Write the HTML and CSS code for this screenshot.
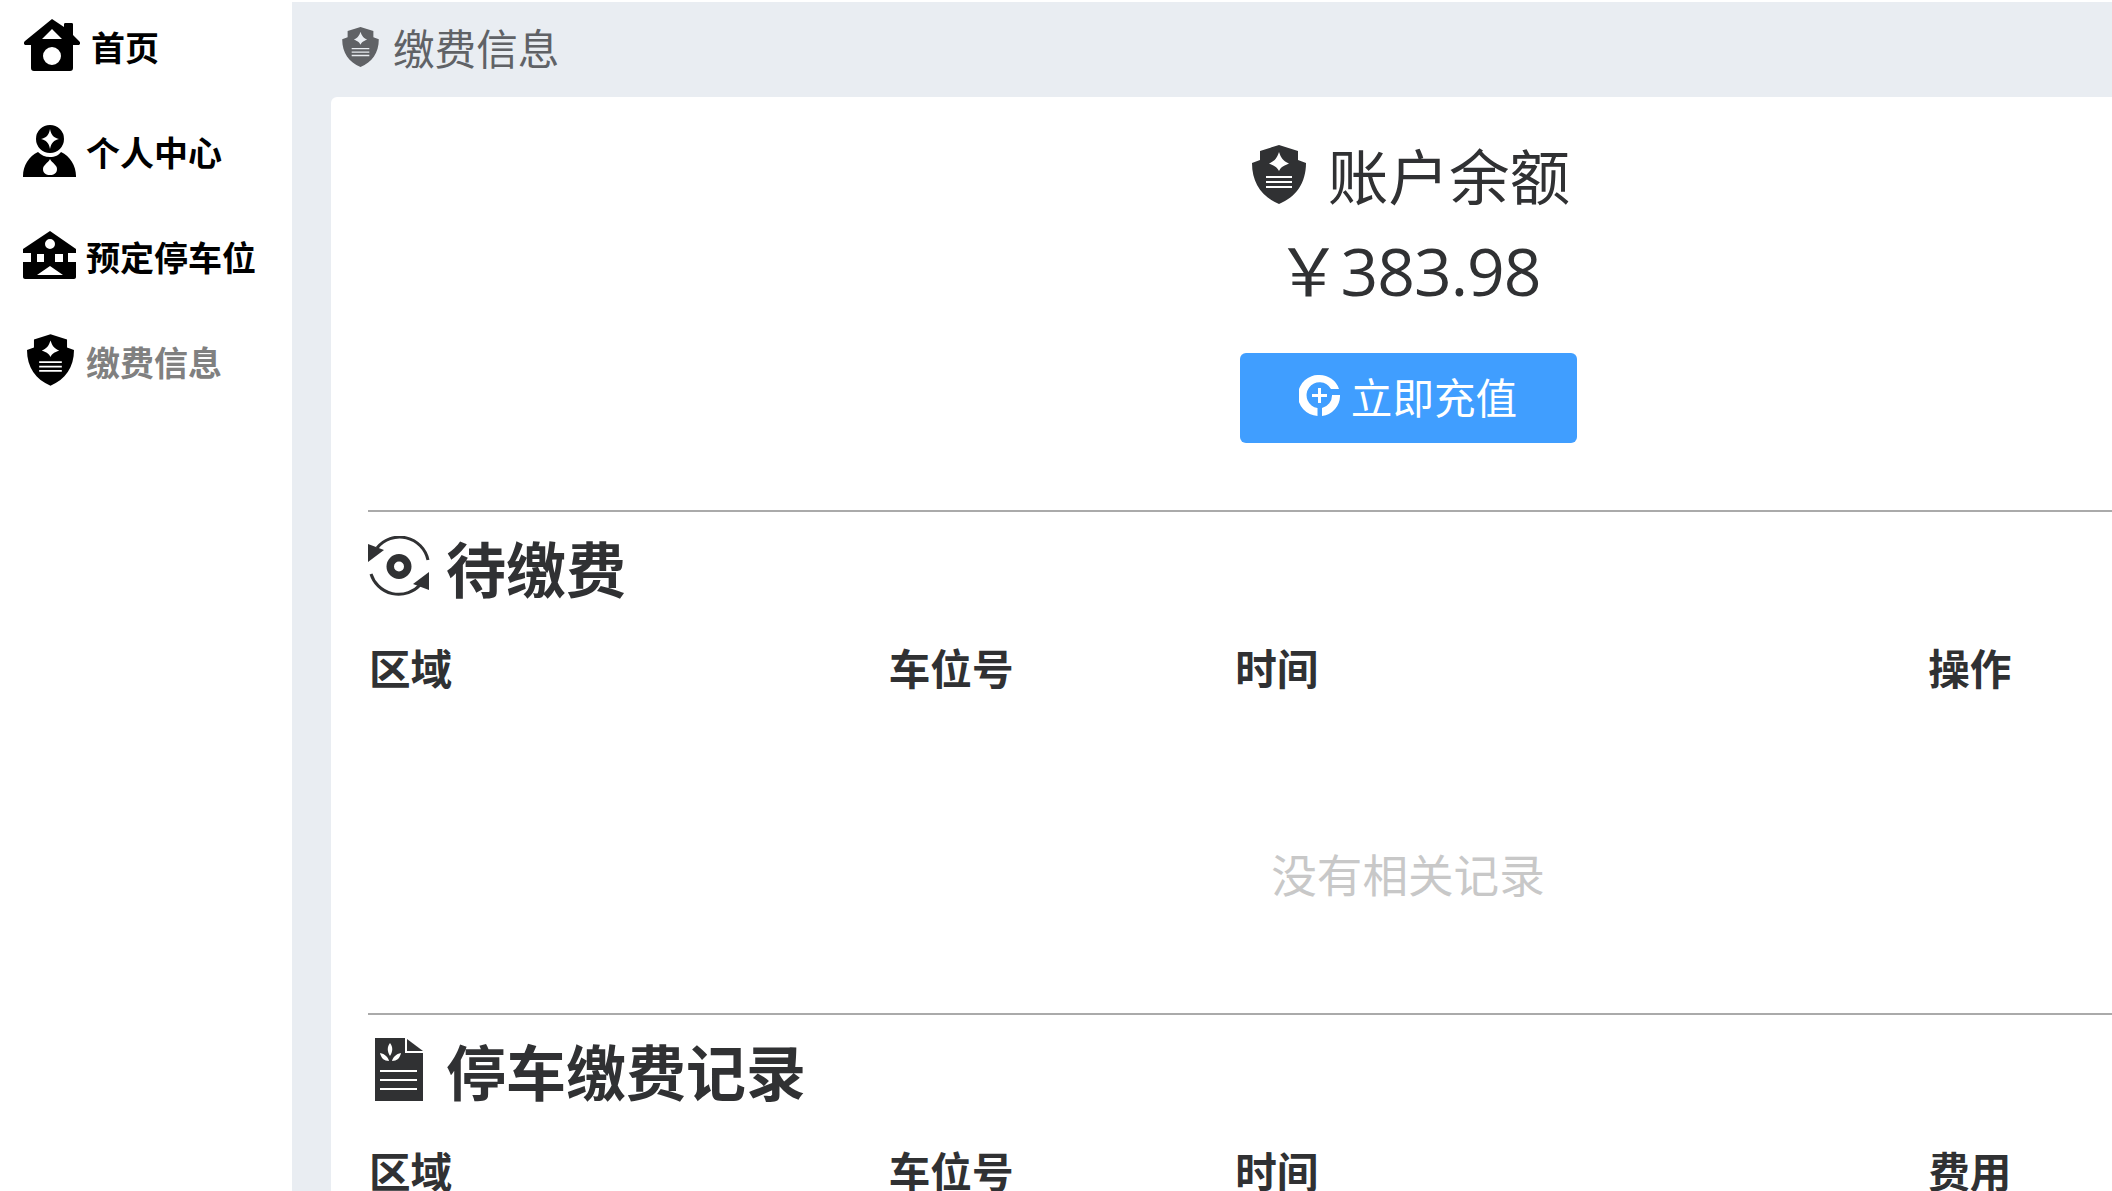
FILE: index.html
```html
<!DOCTYPE html>
<html lang="zh-CN">
<head>
    <meta charset="UTF-8">
    <meta name="viewport" content="width=device-width, initial-scale=1.0">
    <title>缴费信息</title>
    <link rel="stylesheet" href="styles.css">
</head>
<body>
    <svg class="defs">
        <symbol id="icon-shield" viewBox="0 0 54 59">
            <path fill-rule="evenodd" d="M27 0L46 6V15L54 18C54 38 44 52 27 59C10 52 0 38 0 18L8 15V6ZM27 7C25 13 23 16 17 18.500C23 21 25 22 27 26C29 22 31 21 37 18.500C31 16 29 13 27 7ZM14 31V33H40V31ZM14 36V38H40V36ZM14 41V43H40V41Z"/>
        </symbol>
    </svg>
    <div class="layout">
        <aside class="sidebar">
            <a class="nav-item nav-home">
                <svg class="nav-icon icon-house" viewBox="0 0 56 52"><path fill-rule="evenodd" d="M28 0L40 8V5C40 4 41 4 42 4H47C48 4 49 4 49 5V16L55 22C57 24 56 26 54 26H49V49C49 51 48 52 46 52H10C8 52 7 51 7 49V26H2C0 26 -1 24 1 22ZM28 10L18 20H38ZM28 28A9 9 0 1 0 28 46A9 9 0 1 0 28 28Z"/></svg>
                <span>首页</span>
            </a>
            <a class="nav-item">
                <svg class="nav-icon icon-person" viewBox="0 0 53 53"><path fill-rule="evenodd" d="M27 1A14 14 0 1 1 27 29A14 14 0 1 1 27 1ZM27 5C26 11 23 14 18 15C23 16 26 19 27 25C28 19 31 16 36 15C31 14 28 11 27 5ZM15 28C18 31 22 33 27 33C32 33 36 31 38 28C47 32 53 42 53 52V53H0V52C0 42 6 32 15 28ZM27 35C25 39 20 41 20 45C20 49 23 51 27 51C31 51 34 49 34 45C34 41 29 39 27 35Z"/></svg>
                <span>个人中心</span>
            </a>
            <a class="nav-item">
                <svg class="nav-icon icon-parking" viewBox="0 0 53 48"><path fill-rule="evenodd" d="M27 0L53 18V22H45V31H53V46C53 47 52 48 51 48H2C1 48 0 47 0 46V31H8V22H0V18ZM27 8A5 5 0 1 0 27 18A5 5 0 1 0 27 8ZM14 23V31H21V23ZM32 23V31H40V23ZM27 35L14 44H40Z"/></svg>
                <span>预定停车位</span>
            </a>
            <a class="nav-item nav-active">
                <svg class="nav-icon icon-shield-nav"><use href="#icon-shield"/></svg>
                <span>缴费信息</span>
            </a>
        </aside>
        <main class="main">
            <header class="page-header">
                <svg class="header-icon"><use href="#icon-shield"/></svg>
                <span>缴费信息</span>
            </header>
            <div class="card">
                <section class="balance">
                    <div class="balance-title">
                        <svg class="balance-icon"><use href="#icon-shield"/></svg>
                        <span>账户余额</span>
                    </div>
                    <div class="balance-amount">￥383.98</div>
                    <button class="recharge-btn">
                        <svg class="recharge-icon" viewBox="0 0 41 41"><path fill-rule="evenodd" d="M20.500 0A20.500 20.500 0 0 1 40 14H32A13 13 0 1 0 18.500 33V41A20.500 20.500 0 0 1 20.500 0ZM41 20A20.500 20.500 0 0 1 23 41V33A13 13 0 0 0 33 20Z"/><path d="M19 13H22V19H28V22H22V28H19V22H13V19H19Z"/></svg>
                        <span>立即充值</span>
                    </button>
                </section>
                <section class="records">
                    <h2 class="section-title">
                        <svg class="section-icon" viewBox="0 0 62 61"><path fill="none" stroke="currentColor" stroke-width="3" d="M9 12A29 29 0 0 1 60 24M3 38A29 29 0 0 0 52 49"/><path d="M0 8L16 14L0 26ZM61 36V54L45 48Z"/><path fill-rule="evenodd" d="M31 18A12.500 12.500 0 1 1 31 43A12.500 12.500 0 1 1 31 18ZM31 25.500A5 5 0 1 0 31 35.500A5 5 0 1 0 31 25.500Z"/></svg>
                        <span>待缴费</span>
                    </h2>
                    <div class="table-row table-head">
                        <div>区域</div><div>车位号</div><div>时间</div><div>操作</div>
                    </div>
                    <div class="table-empty">没有相关记录</div>
                </section>
                <section class="records">
                    <h2 class="section-title">
                        <svg class="section-icon icon-doc" viewBox="0 0 48 63"><path fill-rule="evenodd" d="M0 0H30V15H48V63H0ZM5 32V34H42V32ZM5 41V43H42V41ZM5 50V52H42V50ZM15 5C12 9 12 13 15 18C18 13 18 9 15 5ZM5 15C6 20 9 23 14 23C13 19 10 16 5 15ZM26 15C21 16 18 19 17 23C22 23 25 20 26 15Z"/><path d="M32 1L48 13H32Z"/></svg>
                        <span>停车缴费记录</span>
                    </h2>
                    <div class="table-row table-head">
                        <div>区域</div><div>车位号</div><div>时间</div><div>费用</div>
                    </div>
                </section>
            </div>
        </main>
    </div>
</body>
</html>
```

FILE: styles.css
```css
html, body {
    margin: 0;
    height: 100%;
    overflow: hidden;
    background-color: #fff;
}
body {
    font-family: "Noto Sans CJK SC", "Noto Sans", sans-serif;
    color: #303133;
}
.defs {
    display: none;
}
.layout {
    display: flex;
    width: 2485px;
    height: 1191px;
}
.sidebar {
    width: 292px;
    flex-shrink: 0;
}
.nav-item {
    display: flex;
    align-items: center;
    height: 92px;
    margin-bottom: 13px;
    padding-left: 23px;
    gap: 10px;
    font-size: 34px;
    font-weight: 700;
    color: #000;
}
.nav-home {
    gap: 11px;
    padding-left: 24px;
}
.nav-active {
    color: #808080;
}
.nav-icon {
    flex-shrink: 0;
    margin-top: -2px;
}
.icon-house {
    width: 56px;
    height: 52px;
}
.icon-person {
    width: 53px;
    height: 53px;
}
.icon-parking {
    width: 53px;
    height: 48px;
}
.icon-shield-nav {
    width: 47px;
    height: 52px;
    margin-left: 4px;
    margin-right: 2px;
}
.main {
    flex: 1;
    display: flex;
    flex-direction: column;
    margin-top: 2px;
    background-color: #e9edf2;
}
.page-header {
    display: flex;
    flex-shrink: 0;
    align-items: center;
    height: 95px;
    padding-left: 50px;
    padding-bottom: 6px;
    box-sizing: border-box;
    gap: 14px;
    font-size: 41.6px;
    color: #606266;
}
.header-icon {
    width: 37px;
    height: 40px;
    fill: #606266;
}
.card {
    flex: 1;
    margin-left: 39px;
    padding: 0 37px;
    background-color: #fff;
    border-radius: 6px 0 0 0;
}
.balance {
    display: flex;
    flex-direction: column;
    align-items: center;
    height: 413px;
    padding-top: 46px;
    box-sizing: border-box;
}
.balance-title {
    display: flex;
    align-items: center;
    gap: 22px;
    padding-left: 6px;
    font-size: 60.6px;
    line-height: 62px;
}
.balance-icon {
    width: 54px;
    height: 59px;
    fill: #303133;
}
.balance-amount {
    margin-top: 31px;
    font-family: "Open Sans", "Noto Sans CJK SC", sans-serif;
    font-size: 66px;
    letter-spacing: -1px;
    line-height: 68px;
}
.recharge-btn {
    display: flex;
    align-items: center;
    justify-content: center;
    gap: 11px;
    width: 337px;
    height: 90px;
    margin-top: 49px;
    padding: 0 0 5px;
    border: none;
    border-radius: 6px;
    background-color: #409eff;
    color: #fff;
    font-family: inherit;
    font-size: 41.6px;
}
.recharge-icon {
    width: 41px;
    height: 41px;
    fill: #fff;
}
.records {
    border-top: 2px solid #aaa;
}
.section-title {
    display: flex;
    align-items: center;
    gap: 16px;
    height: 112px;
    margin: 0;
    padding-bottom: 4px;
    box-sizing: border-box;
    font-size: 60px;
    font-weight: 700;
}
.section-icon {
    width: 62px;
    height: 61px;
    fill: currentColor;
}
.icon-doc {
    width: 48px;
    height: 63px;
    margin: 0 7px;
}
.table-row {
    display: grid;
    grid-template-columns: 3fr 2fr 4fr 3fr;
    padding-left: 1px;
}
.table-head {
    height: 60px;
    margin-top: 13px;
    font-size: 41.6px;
    font-weight: 700;
    line-height: 60px;
}
.table-empty {
    display: flex;
    align-items: center;
    justify-content: center;
    height: 316px;
    padding-top: 36px;
    box-sizing: border-box;
    font-size: 45.6px;
    color: #c8c8c8;
}
```
